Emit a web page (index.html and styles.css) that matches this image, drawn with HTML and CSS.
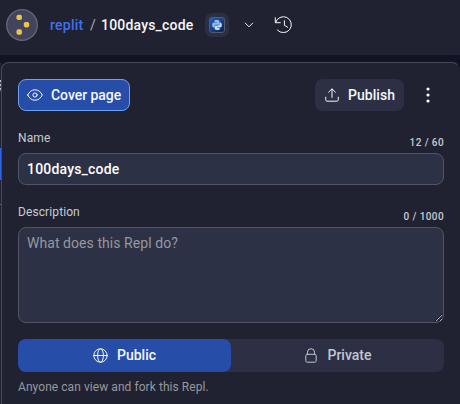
FILE: index.html
```html
<!DOCTYPE html>
<html lang="en">
<head>
<meta charset="utf-8">
<title>100days_code</title>
<link rel="stylesheet" href="styles.css">
</head>
<body>
<header class="topbar">
  <svg class="avatar" width="32" height="32" viewBox="0 0 32 32"><circle cx="16" cy="16" r="15.3" fill="#42445c" stroke="#656777" stroke-width="1.3"/><g fill="#efc44d"><rect x="10.5" y="5.7" width="5.4" height="5.4" rx="1.8"/><rect x="17.8" y="13" width="5.4" height="5.4" rx="1.8"/><rect x="10.5" y="20.3" width="5.4" height="5.4" rx="1.8"/></g></svg>
  <a class="owner">replit</a>
  <span class="slash">/</span>
  <span class="title">100days_code</span>
  <span class="language">
    <svg width="16" height="16" viewBox="0 0 16 16"><defs><linearGradient id="tile" x1="0" y1="0" x2="1" y2="1"><stop stop-color="#2860b5"/><stop offset="1" stop-color="#08204e"/></linearGradient></defs><rect x=".5" y=".5" width="15" height="15" rx="2.5" fill="url(#tile)" stroke="#535a70"/><path d="M5.3 5V4.3c0-1 .8-1.3 2.5-1.3s2.6.4 2.6 1.4v2.3c0 .8-.5 1.1-1.3 1.1H7c-1 0-1.5.5-1.5 1.4v1.3h-.8c-1 0-1.5-.9-1.5-2.5S3.7 5.5 4.7 5.5h3.2V5z" fill="#8fc0f5"/><path d="M10.7 11v.7c0 1-.8 1.3-2.5 1.3s-2.6-.4-2.6-1.4V9.5c0-.8.5-1.1 1.3-1.1H9c1 0 1.5-.5 1.5-1.4V5.5h.8c1 0 1.5.9 1.5 2.5s-.5 2.5-1.5 2.5H8.1v.5z" fill="#c5ddf8"/></svg>
  </span>
  <svg class="chevron" width="10" height="6" viewBox="0 0 10 6"><path d="M1.3 1.1L5 4.8l3.7-3.7" class="stroke"/></svg>
  <svg class="history" width="20" height="18" viewBox="0 0 20 18"><path d="M1.3 1.7v5h5M1.6 6.5A8 8 0 1 1 3.4 14.1M10.4 4.7v4.7l3.2 1.8" class="stroke"/></svg>
</header>
<div class="backdrop"><i class="tab"></i><i class="glyph"></i><i class="selected"></i><i class="rule"></i></div>
<main class="panel">
  <div class="actions">
    <button class="button cover"><svg width="16" height="12" viewBox="0 0 16 12"><path d="M.7 6C2.3 2.6 4.9.8 8 .8S13.7 2.6 15.3 6C13.7 9.4 11.1 11.2 8 11.2S2.3 9.4.7 6z" class="stroke"/><circle cx="8" cy="6" r="2.1" class="stroke"/></svg><span>Cover page</span></button>
    <div class="right">
      <button class="button publish"><svg width="14" height="14" viewBox="0 0 14 14"><path d="M.7 9.2v2.6c0 .8.6 1.4 1.4 1.4h9.8c.8 0 1.4-.6 1.4-1.4V9.2M7 9.4V1M3.6 4.2L7 .9l3.4 3.3" class="stroke"/></svg><span>Publish</span></button>
      <svg class="more" width="4" height="16" viewBox="0 0 4 16" fill="#fff"><circle cx="2" cy="2" r="1.55"/><circle cx="2" cy="8" r="1.55"/><circle cx="2" cy="14" r="1.55"/></svg>
    </div>
  </div>
  <div class="labels name-labels"><label for="name">Name</label><span class="count">12 / 60</span></div>
  <input id="name" class="field" value="100days_code">
  <div class="labels description-labels"><label for="description">Description</label><span class="count">0 / 1000</span></div>
  <textarea id="description" class="field area" placeholder="What does this Repl do?"></textarea>
  <div class="privacy">
    <button class="choice active"><svg width="15" height="15" viewBox="0 0 15 15"><g class="stroke"><circle cx="7.5" cy="7.5" r="6.7"/><ellipse cx="7.5" cy="7.5" rx="2.9" ry="6.7"/><path d="M.8 7.5h13.4"/></g></svg><span>Public</span></button>
    <button class="choice private"><svg width="12" height="15" viewBox="0 0 12 15"><path d="M2.5 6.3V4.2a3.5 3.5 0 0 1 7 0v2.1M2.2 6.3h7.6c.8 0 1.4.6 1.4 1.4v5c0 .9-.6 1.5-1.4 1.5H2.2c-.8 0-1.4-.6-1.4-1.5v-5c0-.8.6-1.4 1.4-1.4z" class="stroke"/></svg><span>Private</span></button>
  </div>
  <p class="hint">Anyone can view and fork this Repl.</p>
</main>
</body>
</html>
```

FILE: styles.css
```css
* { box-sizing: border-box; }
body { margin: 0; height: 404px; overflow: hidden; background: #111424; color: #f5f7fa; font: 500 14px/20px Roboto, sans-serif; }
svg { display: block; flex: none; overflow: visible; }
.stroke { fill: none; stroke: currentColor; stroke-width: 1; stroke-linecap: round; stroke-linejoin: round; }
.topbar { height: 55px; padding: 0 0 5px 6px; display: flex; align-items: center; background: #202231; }
.owner { width: 34px; margin-left: 12px; color: #426fef; letter-spacing: .25px; }
.slash { width: 6px; margin-left: 6px; color: #a8adb7; font-weight: 400; }
.title { width: 92px; margin-left: 5px; letter-spacing: .19px; }
.language { width: 24px; height: 24px; margin-left: 12px; padding: 4px; border-radius: 7px; background: #2c2f43; }
.chevron { margin-left: 15px; }
.history { margin-left: 20px; }
.backdrop i { position: absolute; left: 0; width: 2px; }
.backdrop .tab { top: 63px; height: 341px; background: #202231; }
.backdrop .glyph { top: 80px; height: 12px; background: repeating-linear-gradient(#b9bcc3 0 2px, #404350 2px 4px); }
.backdrop .selected { top: 148px; height: 32px; background: #2f64e5; }
.backdrop .rule { top: 204px; height: 1px; background: #5f6270; }
.panel { position: relative; height: 360px; margin: 7px 0 0 1px; padding: 16px 15px 0 16px; border: 1px solid #464957; border-right-color: #202231; border-radius: 8px; background: #202231; }
.actions, .right, .labels, .button, .choice, .privacy { display: flex; align-items: center; }
.actions { justify-content: space-between; }
button { font: inherit; color: inherit; border: 0; padding: 0; }
.button { height: 32px; border-radius: 8px; }
.cover { width: 112px; padding-left: 8px; gap: 8px; border: 1px solid #6ba0f5; background: #264da8; letter-spacing: -.05px; }
.publish { width: 89px; padding-left: 10px; gap: 9px; background: #2d3044; letter-spacing: .05px; }
.more { margin: 0 14px 0 22px; }
.labels { justify-content: space-between; color: #c8ccd2; font-size: 12px; font-weight: 400; letter-spacing: .1px; }
.name-labels { height: 42px; padding-top: 12px; }
.description-labels { height: 42px; padding-top: 11px; }
.count { padding-top: 10px; font-size: 10px; font-weight: 500; letter-spacing: .4px; }
.field { display: block; width: 100%; height: 32px; padding: 0 8px; border: 1px solid #515466; border-radius: 8px; outline: 0; background: #2d3145; color: #fff; font: inherit; letter-spacing: .19px; }
.area { height: 96px; padding-top: 5px; font-weight: 400; letter-spacing: .06px; resize: both; color-scheme: dark; }
.area::placeholder { color: #9698a0; opacity: 1; }
.privacy { height: 33px; margin-top: 16px; border-radius: 8px; background: #2d3044; }
.choice { width: 213px; height: 33px; justify-content: center; gap: 9px; border-radius: 8px; background: transparent; color: #c2c6cf; }
.choice span { margin-top: -1px; }
.choice.active { background: #264da8; color: #f5f7fa; }
.private { gap: 10px; padding-left: 2px; }
.hint { margin: 5px 0 0; color: #9698a0; font-size: 12px; font-weight: 400; letter-spacing: .06px; }
```
